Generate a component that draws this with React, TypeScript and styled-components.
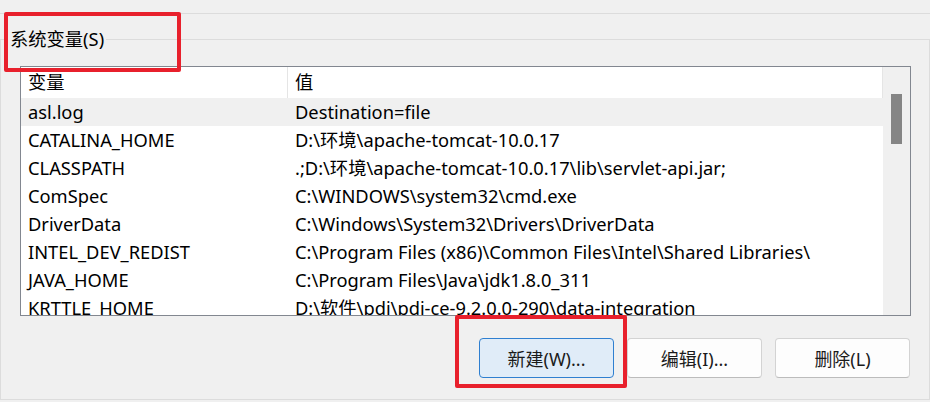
import React from "react";
import styled, { createGlobalStyle } from "styled-components";

const GlobalStyle = createGlobalStyle`
  html, body { margin: 0; padding: 0; background: #f0f0f0; }
  * { box-sizing: border-box; }
`;

const Page = styled.div`
  position: relative;
  width: 930px;
  height: 402px;
  overflow: hidden;
  background: #f0f0f0;
  font-family: "Noto Sans", "Noto Sans CJK SC", sans-serif;
  font-size: 18.3px;
  color: #000;
`;

const TopStrip = styled.div`
  height: 14px;
  border-bottom: 1px solid #dcdcdc;
`;

const Group = styled.fieldset`
  margin: 13px 0 0 0;
  padding: 0 19px 0 0;
  border: 1px solid #dcdcdc;
  height: 373px;
  min-width: 0;
`;

const Legend = styled.legend`
  margin-left: 7px;
  padding: 0 2px;
  height: 24px;
  line-height: 24px;
  color: #000;
`;

const ListBox = styled.div`
  margin: 15px 0 0 19px;
  width: 891px;
  height: 250px;
  border: 1px solid #828790;
  background: #fff;
  display: grid;
  grid-template-columns: 862px 1fr;
  overflow: hidden;
`;

const Table = styled.div`
  display: flex;
  flex-direction: column;
  overflow: hidden;
`;

const Row = styled.div<{ $header?: boolean; $selected?: boolean }>`
  display: grid;
  grid-template-columns: 267px 1fr;
  flex: none;
  height: ${(p) => (p.$header ? "31px" : "28px")};
  line-height: ${(p) => (p.$header ? "30px" : "28px")};
  background: ${(p) => (p.$selected ? "#f0f0f0" : "#fff")};
  white-space: nowrap;
`;

const Cell = styled.div<{ $header?: boolean }>`
  padding-left: 7px;
  overflow: hidden;
  border-right: ${(p) => (p.$header ? "1px solid #e5e5e5" : "none")};
`;

const ScrollTrack = styled.div`
  background: #f0f0f0;
  padding: 27px 0 0 8px;
`;

const Thumb = styled.div`
  width: 11px;
  height: 50px;
  background: #858585;
`;

const Buttons = styled.div`
  display: flex;
  justify-content: flex-end;
  gap: 13px;
  margin-top: 22px;
`;

const Button = styled.button<{ $primary?: boolean }>`
  width: 135px;
  height: 40px;
  border-radius: 4px;
  font-family: inherit;
  font-size: 18px;
  color: #1b1b1b;
  background: ${(p) => (p.$primary ? "#e0ecf8" : "#fdfdfd")};
  border: 1px solid ${(p) => (p.$primary ? "#2f7fd0" : "#d3d3d3")};
  border-bottom-color: ${(p) => (p.$primary ? "#2f7fd0" : "#bcbcbc")};
  padding: 0;
`;

const Highlight = styled.div<{ $x: number; $y: number; $w: number; $h: number }>`
  position: absolute;
  left: ${(p) => p.$x}px;
  top: ${(p) => p.$y}px;
  width: ${(p) => p.$w}px;
  height: ${(p) => p.$h}px;
  border: 4px solid #e8202c;
  border-radius: 2px;
  pointer-events: none;
`;

const rows: [string, string][] = [
  ["asl.log", "Destination=file"],
  ["CATALINA_HOME", String.raw`D:\环境\apache-tomcat-10.0.17`],
  ["CLASSPATH", String.raw`.;D:\环境\apache-tomcat-10.0.17\lib\servlet-api.jar;`],
  ["ComSpec", String.raw`C:\WINDOWS\system32\cmd.exe`],
  ["DriverData", String.raw`C:\Windows\System32\Drivers\DriverData`],
  ["INTEL_DEV_REDIST", "C:\\Program Files (x86)\\Common Files\\Intel\\Shared Libraries\\"],
  ["JAVA_HOME", String.raw`C:\Program Files\Java\jdk1.8.0_311`],
  ["KRTTLE_HOME", String.raw`D:\软件\pdi\pdi-ce-9.2.0.0-290\data-integration`],
];

export default function App() {
  return (
    <Page>
      <GlobalStyle />
      <TopStrip />
      <Group>
        <Legend>系统变量(S)</Legend>
        <ListBox>
          <Table>
            <Row $header>
              <Cell $header>变量</Cell>
              <Cell $header>值</Cell>
            </Row>
            {rows.map(([k, v], i) => (
              <Row key={k} $selected={i === 0}>
                <Cell>{k}</Cell>
                <Cell>{v}</Cell>
              </Row>
            ))}
          </Table>
          <ScrollTrack>
            <Thumb />
          </ScrollTrack>
        </ListBox>
        <Buttons>
          <Button $primary>新建(W)...</Button>
          <Button>编辑(I)...</Button>
          <Button>删除(L)</Button>
        </Buttons>
      </Group>
      <Highlight $x={4} $y={12} $w={177} $h={60} />
      <Highlight $x={455} $y={315} $w={172} $h={73} />
    </Page>
  );
}
